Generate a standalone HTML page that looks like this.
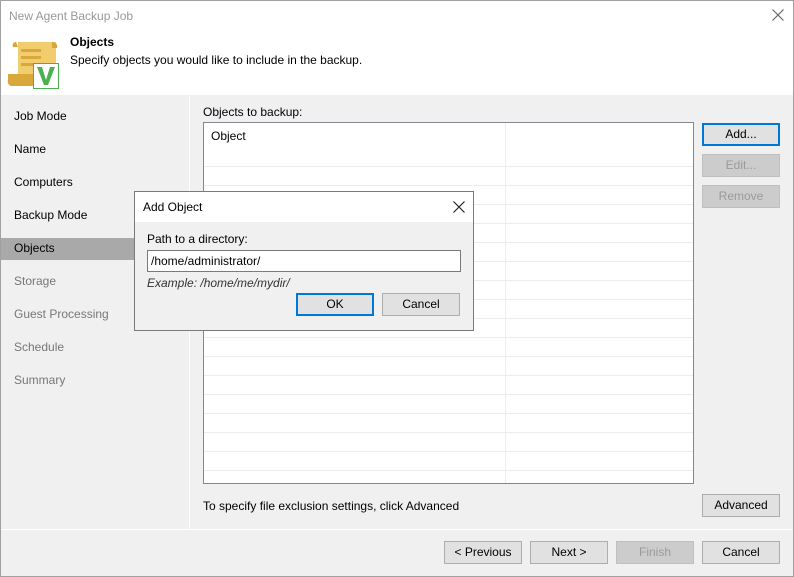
<html><head><style>
body{margin:0;width:794px;height:577px;overflow:hidden;font-family:"Liberation Sans",sans-serif;font-size:12px;color:#000;position:relative;background:#f0f0f0}
.a{position:absolute}
.btn{position:absolute;background:#e1e1e1;border:1px solid #adadad;box-sizing:border-box;text-align:center;font-size:12px}
.dis{background:#cccccc;border-color:#bfbfbf;color:#9a9a9a}
.foc{border:2px solid #0078d7}
.nav{position:absolute;left:14px;font-size:12px}
</style></head><body>
<div class="a" style="left:0;top:0;width:792px;height:575px;border:1px solid #a0a0a0;"></div>
<div class="a" style="left:1px;top:1px;width:792px;height:94px;background:#fff"></div>
<div class="a" style="left:9px;top:9px;color:#999;font-size:12px">New Agent Backup Job</div>
<svg class="a" style="left:772px;top:9px" width="12" height="12"><path d="M0.5 0.5L11.5 11.5M11.5 0.5L0.5 11.5" stroke="#666" stroke-width="1.2"/></svg>
<svg class="a" style="left:6px;top:40px" width="55" height="50">
<path d="M12 2h38v36H12z" fill="#f2cd6e"/><path d="M46 2c4 0 6 3 5 6h-5z" fill="#d8a93a"/>
<path d="M10 2c-3 0-4 3-3 5h5z" fill="#d8a93a"/>
<rect x="15" y="9" width="20" height="3" fill="#d8a93a"/><rect x="15" y="16" width="20" height="3" fill="#d8a93a"/><rect x="15" y="23" width="12" height="3" fill="#d8a93a"/>
<path d="M2 34h30v12H6c-3 0-5-3-4-6z" fill="#d8a93a"/>
<rect x="27.5" y="23.5" width="25" height="25" fill="#fff" stroke="#4caf50"/>
<path d="M31 27h5l4 13 4-13h5l-7 18h-4z" fill="#4caf50"/>
</svg>
<div class="a" style="left:70px;top:35px;font-weight:bold">Objects</div>
<div class="a" style="left:70px;top:53px">Specify objects you would like to include in the backup.</div>
<div class="a" style="left:189px;top:95px;width:1px;height:434px;background:#fff"></div>
<div class="a" style="left:1px;top:529px;width:792px;height:1px;background:#fff"></div>
<div class="a" style="left:1px;top:238px;width:188px;height:22px;background:#a9a9a9"></div>
<div class="nav" style="top:109px">Job Mode</div>
<div class="nav" style="top:142px">Name</div>
<div class="nav" style="top:175px">Computers</div>
<div class="nav" style="top:208px">Backup Mode</div>
<div class="nav" style="top:241px">Objects</div>
<div class="nav" style="top:274px;color:#777">Storage</div>
<div class="nav" style="top:307px;color:#777">Guest Processing</div>
<div class="nav" style="top:340px;color:#777">Schedule</div>
<div class="nav" style="top:373px;color:#777">Summary</div>
<div class="a" style="left:203px;top:105px">Objects to backup:</div>
<div class="a" style="left:203px;top:122px;width:489px;height:360px;border:1px solid #828790;background:#fff;overflow:hidden;
background-image:repeating-linear-gradient(to bottom,transparent 0,transparent 18px,#ececec 18px,#ececec 19px);background-position:0 25px;background-repeat:repeat-y;background-size:100% 19px">
<div class="a" style="left:0;top:0;width:489px;height:40px;background:#fff"></div>
<div class="a" style="left:301px;top:0;width:1px;height:360px;background:#e8eef8"></div>
<div class="a" style="left:7px;top:6px">Object</div>
</div>
<div class="btn foc" style="left:702px;top:123px;width:78px;height:23px;line-height:19px">Add...</div>
<div class="btn dis" style="left:702px;top:154px;width:78px;height:23px;line-height:21px">Edit...</div>
<div class="btn dis" style="left:702px;top:185px;width:78px;height:23px;line-height:21px">Remove</div>
<div class="a" style="left:203px;top:499px">To specify file exclusion settings, click Advanced</div>
<div class="btn" style="left:702px;top:494px;width:78px;height:23px;line-height:21px">Advanced</div>
<div class="btn" style="left:444px;top:541px;width:78px;height:23px;line-height:21px">&lt; Previous</div>
<div class="btn" style="left:530px;top:541px;width:78px;height:23px;line-height:21px">Next &gt;</div>
<div class="btn dis" style="left:616px;top:541px;width:78px;height:23px;line-height:21px">Finish</div>
<div class="btn" style="left:702px;top:541px;width:78px;height:23px;line-height:21px">Cancel</div>
<div class="a" style="left:134px;top:191px;width:338px;height:138px;border:1px solid #7a7a7a;background:#f0f0f0">
<div class="a" style="left:0;top:0;width:338px;height:30px;background:#fff"></div>
<div class="a" style="left:8px;top:8px">Add Object</div>
<svg class="a" style="left:318px;top:9px" width="12" height="12"><path d="M0.5 0.5L11.5 11.5M11.5 0.5L0.5 11.5" stroke="#222" stroke-width="1.2"/></svg>
<div class="a" style="left:12px;top:40px">Path to a directory:</div>
<div class="a" style="left:12px;top:58px;width:314px;height:22px;border:1px solid #7a7a7a;background:#fff;box-sizing:border-box;padding-left:3px;line-height:20px">/home/administrator/</div>
<div class="a" style="left:12px;top:84px;font-style:italic;color:#333">Example: /home/me/mydir/</div>
<div class="btn foc" style="left:161px;top:101px;width:78px;height:23px;line-height:19px">OK</div>
<div class="btn" style="left:247px;top:101px;width:78px;height:23px;line-height:21px">Cancel</div>
</div>
</body></html>
